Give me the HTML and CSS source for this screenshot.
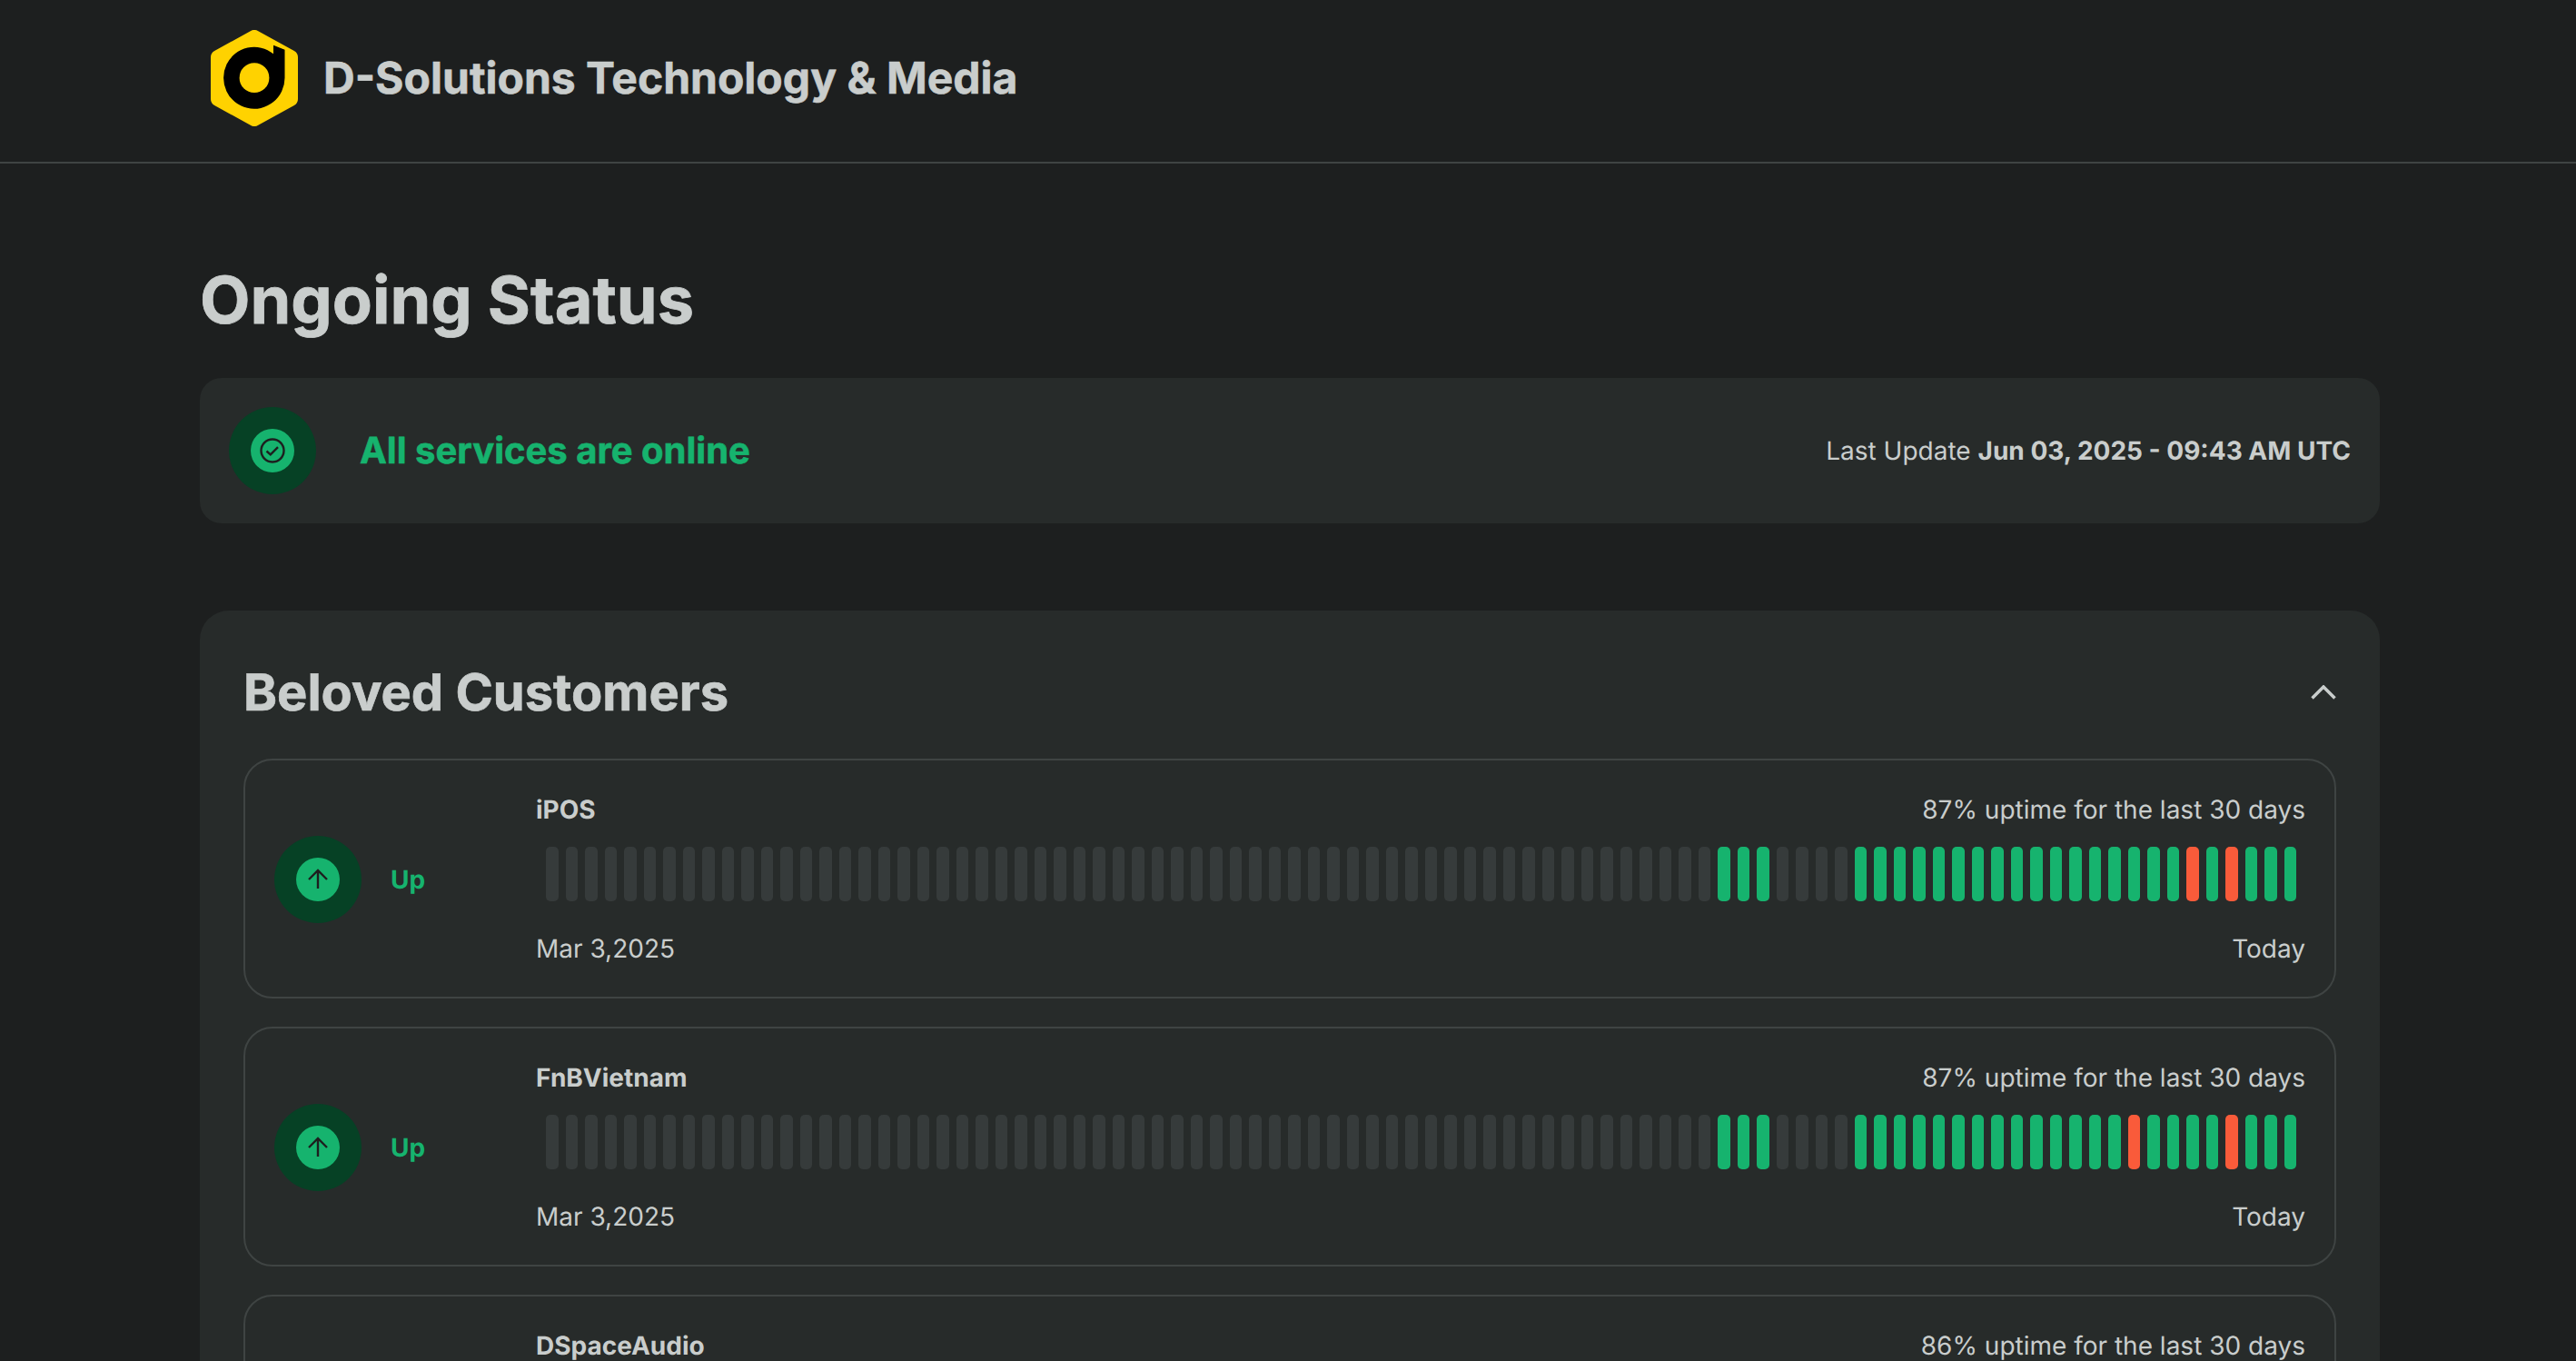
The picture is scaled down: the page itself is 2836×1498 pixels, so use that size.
FILE: index.html
```html
<!DOCTYPE html>
<html lang="en">
<head>
<meta charset="utf-8">
<title>D-Solutions Technology &amp; Media</title>
<link rel="stylesheet" href="styles.css">
</head>
<body>
<header class="topbar">
  <div class="brand">
    <svg class="logo" viewBox="0 0 96 106" aria-hidden="true">
      <polygon class="logo-hex" points="48,8 88,30 88,76 48,98 8,76 8,30"/>
      <path class="logo-d" d="M81.5 21.7V52.7A33.7 34 0 1 1 69 26.3V16.7Z"/>
      <circle class="logo-eye" cx="48" cy="52.7" r="16.4"/>
    </svg>
    <span class="brand-name">D-Solutions Technology &amp; Media</span>
  </div>
</header>
<main class="page">
  <h1 class="title">Ongoing Status</h1>
  <section class="banner">
    <div class="banner-left">
      <span class="halo"><span class="dot">
        <svg class="dot-icon" viewBox="0 0 32 32" aria-hidden="true"><circle cx="16" cy="16" r="12.5"/><path d="M9.5 16.5L13.8 20.4L22 12.2"/></svg>
      </span></span>
      <span class="banner-text">All services are online</span>
    </div>
    <div class="updated">Last Update <strong>Jun 03, 2025 - 09:43 AM UTC</strong></div>
  </section>
  <section class="group">
    <div class="group-head">
      <h2 class="group-title">Beloved Customers</h2>
      <svg class="chevron" viewBox="0 0 28 16" aria-hidden="true"><path d="M1.5 14.5L14 2L26.5 14.5"/></svg>
    </div>
    <div class="rows">
      <article class="row">
        <div class="state">
          <span class="halo"><span class="dot"><svg class="dot-icon" viewBox="0 0 32 32" aria-hidden="true"><path d="M16 26V6M6 16L16 6L26 16"/></svg></span></span>
          <span class="state-label">Up</span>
        </div>
        <div class="detail">
          <div class="line"><strong class="name">iPOS</strong><span>87% uptime for the last 30 days</span></div>
          <div class="bars">
            <i></i><i></i><i></i><i></i><i></i><i></i><i></i><i></i><i></i><i></i>
            <i></i><i></i><i></i><i></i><i></i><i></i><i></i><i></i><i></i><i></i>
            <i></i><i></i><i></i><i></i><i></i><i></i><i></i><i></i><i></i><i></i>
            <i></i><i></i><i></i><i></i><i></i><i></i><i></i><i></i><i></i><i></i>
            <i></i><i></i><i></i><i></i><i></i><i></i><i></i><i></i><i></i><i></i>
            <i></i><i></i><i></i><i></i><i></i><i></i><i></i><i></i><i></i><i></i>
            <i class="ok"></i><i class="ok"></i><i class="ok"></i><i></i><i></i><i></i><i></i>
            <i class="ok"></i><i class="ok"></i><i class="ok"></i><i class="ok"></i><i class="ok"></i><i class="ok"></i><i class="ok"></i><i class="ok"></i><i class="ok"></i><i class="ok"></i><i class="ok"></i><i class="ok"></i><i class="ok"></i><i class="ok"></i><i class="ok"></i><i class="ok"></i><i class="ok"></i>
            <i class="bad"></i><i class="ok"></i><i class="bad"></i><i class="ok"></i><i class="ok"></i><i class="ok"></i>
          </div>
          <div class="line"><span>Mar 3,2025</span><span>Today</span></div>
        </div>
      </article>
      <article class="row">
        <div class="state">
          <span class="halo"><span class="dot"><svg class="dot-icon" viewBox="0 0 32 32" aria-hidden="true"><path d="M16 26V6M6 16L16 6L26 16"/></svg></span></span>
          <span class="state-label">Up</span>
        </div>
        <div class="detail">
          <div class="line"><strong class="name">FnBVietnam</strong><span>87% uptime for the last 30 days</span></div>
          <div class="bars">
            <i></i><i></i><i></i><i></i><i></i><i></i><i></i><i></i><i></i><i></i>
            <i></i><i></i><i></i><i></i><i></i><i></i><i></i><i></i><i></i><i></i>
            <i></i><i></i><i></i><i></i><i></i><i></i><i></i><i></i><i></i><i></i>
            <i></i><i></i><i></i><i></i><i></i><i></i><i></i><i></i><i></i><i></i>
            <i></i><i></i><i></i><i></i><i></i><i></i><i></i><i></i><i></i><i></i>
            <i></i><i></i><i></i><i></i><i></i><i></i><i></i><i></i><i></i><i></i>
            <i class="ok"></i><i class="ok"></i><i class="ok"></i><i></i><i></i><i></i><i></i>
            <i class="ok"></i><i class="ok"></i><i class="ok"></i><i class="ok"></i><i class="ok"></i><i class="ok"></i><i class="ok"></i><i class="ok"></i><i class="ok"></i><i class="ok"></i><i class="ok"></i><i class="ok"></i><i class="ok"></i><i class="ok"></i>
            <i class="bad"></i><i class="ok"></i><i class="ok"></i><i class="ok"></i><i class="ok"></i>
            <i class="bad"></i><i class="ok"></i><i class="ok"></i><i class="ok"></i>
          </div>
          <div class="line"><span>Mar 3,2025</span><span>Today</span></div>
        </div>
      </article>
      <article class="row">
        <div class="state">
          <span class="halo"><span class="dot"><svg class="dot-icon" viewBox="0 0 32 32" aria-hidden="true"><path d="M16 26V6M6 16L16 6L26 16"/></svg></span></span>
          <span class="state-label">Up</span>
        </div>
        <div class="detail">
          <div class="line"><strong class="name">DSpaceAudio</strong><span>86% uptime for the last 30 days</span></div>
          <div class="bars">
            <i></i><i></i><i></i><i></i><i></i><i></i><i></i><i></i><i></i><i></i>
            <i></i><i></i><i></i><i></i><i></i><i></i><i></i><i></i><i></i><i></i>
            <i></i><i></i><i></i><i></i><i></i><i></i><i></i><i></i><i></i><i></i>
            <i></i><i></i><i></i><i></i><i></i><i></i><i></i><i></i><i></i><i></i>
            <i></i><i></i><i></i><i></i><i></i><i></i><i></i><i></i><i></i><i></i>
            <i></i><i></i><i></i><i></i><i></i><i></i><i></i><i></i><i></i><i></i>
            <i class="ok"></i><i class="ok"></i><i class="ok"></i><i></i><i></i><i></i><i></i>
            <i class="ok"></i><i class="ok"></i><i class="ok"></i><i class="ok"></i><i class="ok"></i><i class="ok"></i><i class="ok"></i><i class="ok"></i><i class="ok"></i><i class="ok"></i><i class="ok"></i><i class="ok"></i><i class="ok"></i><i class="ok"></i>
            <i class="bad"></i><i class="ok"></i><i class="bad"></i><i class="ok"></i><i class="bad"></i>
            <i class="bad"></i><i class="ok"></i><i class="ok"></i><i class="ok"></i>
          </div>
          <div class="line"><span>Mar 3,2025</span><span>Today</span></div>
        </div>
      </article>
    </div>
  </section>
</main>
</body>
</html>
```

FILE: styles.css
```css
* { box-sizing: border-box; }
html, body { margin: 0; height: 100%; overflow: hidden; }
body {
  background: #1d1f1f;
  color: #c9cdcc;
  font-family: Inter, "Liberation Sans", sans-serif;
  font-size: 28px;
  line-height: 42px;
  text-rendering: geometricPrecision;
}
.topbar {
  height: 180px;
  border-bottom: 2px solid #3f4443;
}
.brand {
  width: 2400px;
  margin-left: 220px;
  padding: 33px 12px 0;
  display: flex;
  align-items: center;
  gap: 28px;
}
.logo { width: 96px; height: 106px; flex: none; }
.logo-hex { fill: #ffd200; stroke: #ffd200; stroke-width: 16; stroke-linejoin: round; }
.logo-d { fill: #000; }
.logo-eye { fill: #ffd200; }
.brand-name { font-size: 48px; line-height: 60px; font-weight: 700; -webkit-text-stroke: 0.6px currentColor; }
.page { width: 2400px; margin-left: 220px; }
.title {
  margin: 0;
  padding: 106px 0 40px;
  font-size: 72px;
  line-height: 90px;
  font-weight: 700;
  -webkit-text-stroke: 0.8px currentColor;
}
.banner {
  height: 160px;
  padding: 0 32px;
  background: #272b2a;
  border-radius: 24px;
  display: flex;
  align-items: center;
  justify-content: space-between;
}
.banner-left { display: flex; align-items: center; gap: 48px; }
.banner-text { font-size: 40px; line-height: 60px; font-weight: 700; color: #16b36e; -webkit-text-stroke: 0.6px currentColor; }
.updated { font-size: 28px; line-height: 42px; }
.updated strong { font-weight: 700; }
.halo {
  width: 96px;
  height: 96px;
  flex: none;
  border-radius: 50%;
  background: #064125;
  display: flex;
  align-items: center;
  justify-content: center;
}
.dot {
  width: 48px;
  height: 48px;
  border-radius: 50%;
  background: #16b36e;
  display: flex;
  align-items: center;
  justify-content: center;
}
.dot-icon { width: 32px; height: 32px; fill: none; stroke: #1d1f1f; stroke-width: 2.4; }
.group {
  margin-top: 96px;
  padding: 48px 48px 0;
  background: #272b2a;
  border-radius: 32px;
  height: 1200px;
}
.group-head {
  display: flex;
  align-items: center;
  justify-content: space-between;
  height: 84px;
  margin-bottom: 31px;
}
.group-title { margin: 0; font-size: 56px; line-height: 84px; font-weight: 700; -webkit-text-stroke: 0.7px currentColor; }
.chevron { width: 28px; height: 16px; fill: none; stroke: #c9cdcc; stroke-width: 3.5; }
.rows { display: flex; flex-direction: column; gap: 31px; }
.row {
  padding: 33px 32px 32px;
  border: 2px solid #3f4443;
  border-radius: 32px;
  display: flex;
  align-items: center;
}
.state { width: 288px; flex: none; display: flex; align-items: center; gap: 32px; }
.state-label { font-weight: 700; color: #16b36e; }
.detail { flex: 1; min-width: 0; }
.line { display: flex; justify-content: space-between; }
.name { font-weight: 700; }
.bars {
  margin: 20px 10px 31px 11px;
  height: 60px;
  display: flex;
  gap: 8px;
}
.bars i { flex: 1; border-radius: 5px; background: #363b3b; }
.bars i.ok { background: #16b36e; }
.bars i.bad { background: #f95b3a; }
```
